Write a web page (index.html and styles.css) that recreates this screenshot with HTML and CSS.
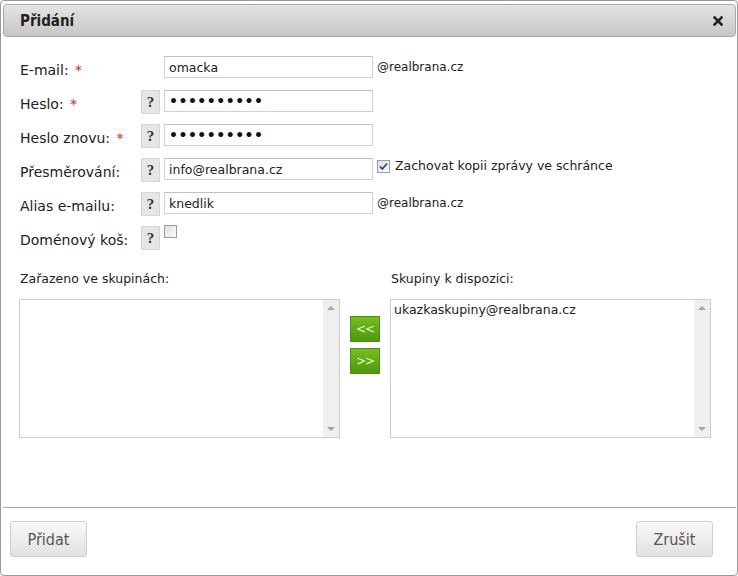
FILE: index.html
```html
<!DOCTYPE html>
<html lang="cs">
<head>
    <meta charset="UTF-8">
    <meta name="viewport" content="width=device-width, initial-scale=1.0">
    <title>Přidání</title>
    <link rel="stylesheet" href="styles.css">
</head>
<body>
    <div class="dialog">
        <div class="dialog-header">
            <span class="dialog-title">Přidání</span>
            <span class="dialog-close">
                <svg width="10" height="10" viewBox="0 0 10 10"><path d="M1.5 1.5 L8.5 8.5 M8.5 1.5 L1.5 8.5" stroke="#222" stroke-width="2.6" stroke-linecap="square"/></svg>
            </span>
        </div>

        <div class="dialog-body">
            <div class="row">
                <label class="label">E-mail: <span class="req">*</span></label>
                <span class="help-spacer"></span>
                <input class="field" type="text" value="omacka">
                <span class="suffix">@realbrana.cz</span>
            </div>
            <div class="row">
                <label class="label">Heslo: <span class="req">*</span></label>
                <span class="help">?</span>
                <input class="field field-pass" type="password" value="heslo12345">
            </div>
            <div class="row">
                <label class="label">Heslo znovu: <span class="req">*</span></label>
                <span class="help">?</span>
                <input class="field field-pass" type="password" value="heslo12345">
            </div>
            <div class="row">
                <label class="label">Přesměrování:</label>
                <span class="help">?</span>
                <input class="field" type="text" value="info@realbrana.cz">
                <span class="check checked check-after">
                    <svg width="11" height="11" viewBox="0 0 11 11"><path d="M2 5.5 L4.3 8 L9 2.5" fill="none" stroke="#21449c" stroke-width="1.8"/></svg>
                </span>
                <span class="check-text">Zachovat kopii zprávy ve schránce</span>
            </div>
            <div class="row">
                <label class="label">Alias e-mailu:</label>
                <span class="help">?</span>
                <input class="field" type="text" value="knedlik">
                <span class="suffix">@realbrana.cz</span>
            </div>
            <div class="row">
                <label class="label">Doménový koš:</label>
                <span class="help">?</span>
                <span class="check check-alone"></span>
            </div>

            <div class="groups">
                <div class="group">
                    <div class="group-label">Zařazeno ve skupinách:</div>
                    <div class="listbox">
                        <div class="list-items"></div>
                        <div class="scrollbar"><span class="arrow-up"></span><span class="arrow-down"></span></div>
                    </div>
                </div>
                <div class="move-buttons">
                    <button class="move">&lt;&lt;</button>
                    <button class="move">&gt;&gt;</button>
                </div>
                <div class="group">
                    <div class="group-label">Skupiny k dispozici:</div>
                    <div class="listbox">
                        <div class="list-items">
                            <div class="list-item">ukazkaskupiny@realbrana.cz</div>
                        </div>
                        <div class="scrollbar"><span class="arrow-up"></span><span class="arrow-down"></span></div>
                    </div>
                </div>
            </div>
        </div>

        <div class="dialog-footer">
            <button class="btn">Přidat</button>
            <button class="btn">Zrušit</button>
        </div>
    </div>
</body>
</html>
```

FILE: styles.css
```css
body {
    margin: 0;
    background: #fff;
    font-family: "DejaVu Sans", Verdana, sans-serif;
    color: #222;
}

.dialog {
    box-sizing: border-box;
    width: 738px;
    height: 576px;
    border: 1px solid #9a9a9a;
    border-radius: 4px;
    background: #fff;
    display: flex;
    flex-direction: column;
}

.dialog-header {
    height: 33px;
    box-sizing: border-box;
    margin: 3px 1px 0 2px;
    border: 1px solid #a8a8a8;
    border-radius: 4px;
    background: linear-gradient(#e4e4e4, #c7c7c7);
    display: flex;
    align-items: center;
    justify-content: space-between;
    padding: 0 12px 0 16px;
}

.dialog-title {
    font-family: "DejaVu Sans Condensed", "DejaVu Sans", sans-serif;
    font-weight: bold;
    font-size: 15px;
    color: #222;
}

.dialog-close {
    display: flex;
}

.dialog-body {
    flex: 1;
    padding: 19px 0 0 17px;
}

.row {
    display: flex;
    align-items: flex-start;
    height: 34px;
}

.label {
    width: 121px;
    margin-left: 2px;
    padding-top: 6px;
    font-size: 14px;
    line-height: 16px;
    color: #222;
}

.req {
    color: #d0202a;
    margin-left: 2px;
}

.help,
.help-spacer {
    width: 19px;
    height: 24px;
    margin-right: 4px;
    box-sizing: border-box;
    flex-shrink: 0;
}

.help {
    background: #e5e5e5;
    border: 1px solid #d6d6d6;
    font-family: "Liberation Serif", serif;
    font-weight: bold;
    font-size: 15px;
    color: #333;
    display: flex;
    align-items: center;
    justify-content: center;
}

.field {
    box-sizing: border-box;
    width: 209px;
    height: 22px;
    margin: 0;
    padding: 0 4px;
    border: 1px solid #cfcfcf;
    border-top-color: #c2c2c2;
    font-family: "DejaVu Sans", Verdana, sans-serif;
    font-size: 12.5px;
    color: #222;
    outline: none;
}

.field-pass {
    font-size: 14px;
    font-weight: bold;
    letter-spacing: 0.5px;
    color: #111;
}

.suffix {
    margin-left: 4px;
    padding-top: 4px;
    font-size: 12px;
    line-height: 14px;
}

.check {
    box-sizing: border-box;
    width: 13px;
    height: 13px;
    border: 1px solid #9c9c9c;
    background: linear-gradient(135deg, #dcdcdc, #fdfdfd);
    display: flex;
    align-items: center;
    justify-content: center;
    flex-shrink: 0;
}

.check-after {
    margin: 2px 0 0 4px;
}

.check-alone {
    margin-top: -1px;
}

.check-text {
    margin-left: 5px;
    padding-top: 1px;
    font-size: 12.5px;
    line-height: 14px;
}

.groups {
    display: flex;
    gap: 10px;
    margin-left: 1px;
}

.group-label {
    margin: 11px 0 12px 1px;
    font-size: 12.5px;
    line-height: 16px;
}

.listbox {
    box-sizing: border-box;
    width: 321px;
    height: 139px;
    border: 1px solid #cdcdcd;
    display: flex;
}

.list-items {
    flex: 1;
    padding: 2px 3px;
}

.list-item {
    font-size: 12.5px;
    line-height: 16px;
}

.scrollbar {
    width: 16px;
    background: #efefef;
    display: flex;
    flex-direction: column;
    justify-content: space-between;
    align-items: center;
    padding: 6px 0;
}

.arrow-up,
.arrow-down {
    width: 0;
    height: 0;
    border-left: 4px solid transparent;
    border-right: 4px solid transparent;
}

.arrow-up {
    border-bottom: 4px solid #a5a5a5;
}

.arrow-down {
    border-top: 4px solid #a5a5a5;
}

.move-buttons {
    display: flex;
    flex-direction: column;
    gap: 6px;
    padding-top: 56px;
}

.move {
    width: 30px;
    height: 26px;
    margin: 0;
    padding: 0;
    border: 1px solid #4d8f12;
    background: linear-gradient(#74bf22, #4c980a);
    color: #e4f7cc;
    font-family: "DejaVu Sans", sans-serif;
    font-size: 12px;
    letter-spacing: -1px;
    cursor: pointer;
}

.dialog-footer {
    height: 68px;
    box-sizing: border-box;
    margin: 0 1px 0 2px;
    border-top: 1px solid #a9a9a9;
    padding: 13px 23px 0 7px;
    display: flex;
    justify-content: space-between;
    align-items: flex-start;
}

.btn {
    width: 77px;
    height: 36px;
    margin: 0;
    border: 1px solid #cfcfcf;
    border-radius: 3px;
    background: linear-gradient(#f9f9f9, #e1e1e1);
    font-family: "DejaVu Sans Condensed", "DejaVu Sans", sans-serif;
    font-size: 16px;
    color: #555;
    cursor: pointer;
}
```
